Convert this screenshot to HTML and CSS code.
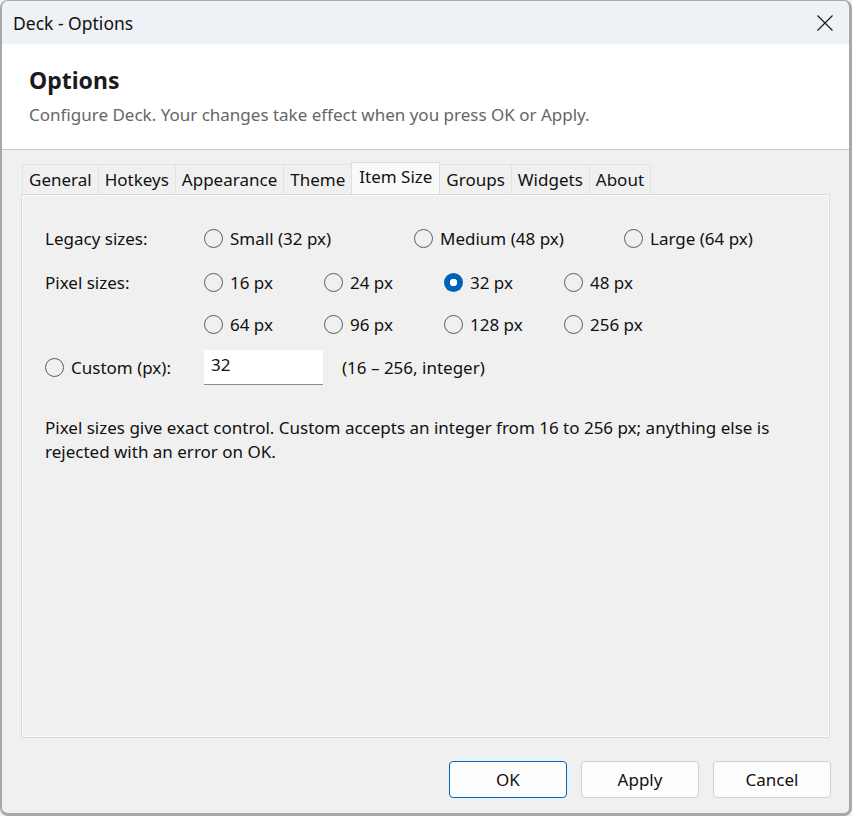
FILE: index.html
```html
<!DOCTYPE html>
<html lang="en">
<head>
  <meta charset="UTF-8" />
  <title>Deck - Options</title>
  <link rel="stylesheet" href="styles.css">
</head>
<body>
  <div class="window">
    <div class="titlebar">
      <span>Deck - Options</span>
      <button class="close" aria-label="Close">
        <svg width="16" height="16" viewBox="0 0 16 16"><path d="M0.5 0.5 L15.5 15.5 M15.5 0.5 L0.5 15.5" stroke="#1a1a1a" stroke-width="1.2" fill="none"/></svg>
      </button>
    </div>

    <div class="header">
      <h1>Options</h1>
      <p>Configure Deck. Your changes take effect when you press OK or Apply.</p>
    </div>

    <div class="content">
      <div class="tabs">
        <div class="tab">General</div>
        <div class="tab">Hotkeys</div>
        <div class="tab">Appearance</div>
        <div class="tab">Theme</div>
        <div class="tab active">Item Size</div>
        <div class="tab">Groups</div>
        <div class="tab">Widgets</div>
        <div class="tab">About</div>
      </div>

      <div class="panel">
        <div class="row legacy">
          <span class="label">Legacy sizes:</span>
          <label class="radio"><input type="radio" name="size" /> Small (32 px)</label>
          <label class="radio"><input type="radio" name="size" /> Medium (48 px)</label>
          <label class="radio"><input type="radio" name="size" /> Large (64 px)</label>
        </div>

        <div class="row pixels">
          <span class="label">Pixel sizes:</span>
          <label class="radio"><input type="radio" name="size" /> 16 px</label>
          <label class="radio"><input type="radio" name="size" /> 24 px</label>
          <label class="radio"><input type="radio" name="size" checked /> 32 px</label>
          <label class="radio"><input type="radio" name="size" /> 48 px</label>
        </div>

        <div class="row pixels second">
          <span class="label"></span>
          <label class="radio"><input type="radio" name="size" /> 64 px</label>
          <label class="radio"><input type="radio" name="size" /> 96 px</label>
          <label class="radio"><input type="radio" name="size" /> 128 px</label>
          <label class="radio"><input type="radio" name="size" /> 256 px</label>
        </div>

        <div class="row custom">
          <label class="radio"><input type="radio" name="size" /> Custom (px):</label>
          <input type="text" class="num" value="32" />
          <span class="hint">(16 – 256, integer)</span>
        </div>

        <p class="note">Pixel sizes give exact control. Custom accepts an integer from 16 to 256 px; anything else is rejected with an error on OK.</p>
      </div>

      <div class="buttons">
        <button class="btn default">OK</button>
        <button class="btn">Apply</button>
        <button class="btn">Cancel</button>
      </div>
    </div>
  </div>
</body>
</html>
```

FILE: styles.css
```css
* {
  box-sizing: border-box;
}

html, body {
  margin: 0;
  padding: 0;
}

body {
  font-family: "Noto Sans", "Open Sans", sans-serif;
  font-size: 17px;
  color: #111;
  background: #f0f0f0;
}

.window {
  height: 816px;
  display: flex;
  flex-direction: column;
  background: #f0f0f0;
  border: solid #a8a8a8;
  border-width: 1px 3px 3px 2px;
  border-radius: 8px;
  overflow: hidden;
}

.titlebar {
  height: 43px;
  flex: none;
  display: flex;
  align-items: center;
  justify-content: space-between;
  padding: 0 16px 0 11px;
  background: #eef2f6;
  font-size: 17.5px;
}

.close {
  border: none;
  background: none;
  padding: 0;
  width: 16px;
  height: 16px;
  display: flex;
}

.header {
  height: 106px;
  flex: none;
  background: #fff;
  border-bottom: 1px solid #c9c9c9;
  padding: 20px 27px 0;
}

.header h1 {
  margin: 0;
  font-size: 23px;
  line-height: 32px;
  font-weight: 700;
  color: #1b1b1b;
}

.header p {
  margin: 7px 0 0;
  line-height: 24px;
  color: #666;
}

.content {
  flex: 1;
  display: flex;
  flex-direction: column;
  padding: 12px 18px 15px 19px;
}

.tabs {
  display: flex;
  align-items: flex-end;
  height: 32px;
  padding-left: 1px;
}

.tab {
  height: 30px;
  padding: 0 6px;
  line-height: 30px;
  background: #f0f0f0;
  border: 1px solid #e3e3e3;
  border-bottom: none;
  border-left: none;
}

.tab:first-child {
  border-left: 1px solid #e3e3e3;
}

.tab.active {
  height: 32px;
  line-height: 28px;
  padding: 0 7px;
  background: #f9f9f9;
  border: 1px solid #dedede;
  border-bottom: none;
  margin-left: -1px;
}

.panel {
  flex: 1;
  margin-right: 1px;
  border: 1px solid #dadada;
  box-shadow: inset 0 0 0 1px #fafafa;
  padding: 21px 23px;
}

.row {
  display: grid;
  align-items: center;
  height: 44px;
}

.legacy {
  grid-template-columns: 159px 210px 210px 210px;
}

.pixels {
  grid-template-columns: 159px 120px 120px 120px 120px;
}

.pixels.second {
  height: 40px;
}

.custom {
  height: 46px;
  grid-template-columns: 159px 138px auto;
}

.radio {
  display: flex;
  align-items: center;
  gap: 7px;
  white-space: nowrap;
}

.radio input {
  appearance: none;
  margin: 0;
  width: 19px;
  height: 19px;
  border: 1px solid #5c5c5c;
  border-radius: 50%;
  background: transparent;
  flex: none;
}

.radio input:checked {
  border: none;
  background: radial-gradient(circle, #fff 0 3.5px, #005fb8 4px);
}

.num {
  width: 119px;
  height: 35px;
  border: none;
  border-bottom: 1px solid #8a8a8a;
  background: #fff;
  font: inherit;
  padding: 0 7px 4px;
  color: #111;
}

.note {
  margin: 26px 0 0;
  line-height: 24px;
}

.buttons {
  display: flex;
  justify-content: flex-end;
  gap: 14px;
  margin-top: 23px;
}

.btn {
  width: 118px;
  height: 37px;
  font: inherit;
  color: #111;
  background: #fdfdfd;
  border: 1px solid #d0d0d0;
  border-radius: 4px;
}

.btn.default {
  border-color: #0067c0;
}
```
